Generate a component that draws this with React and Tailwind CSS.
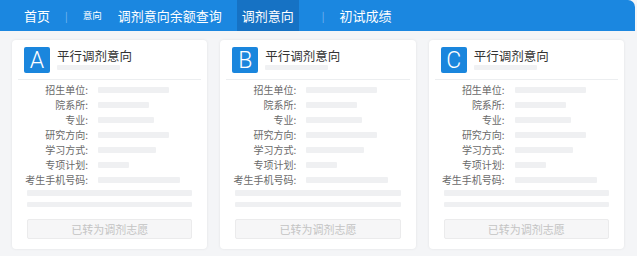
import React from "react";

const rows = [
  ["招生单位:", 71],
  ["院系所:", 51],
  ["专业:", 56],
  ["研究方向:", 71],
  ["学习方式:", 58],
  ["专项计划:", 31],
  ["考生手机号码:", 82],
];

function Card({ letter }) {
  return (
    <div className="flex-1 bg-white rounded-[4px] shadow-[0_0_3px_rgba(0,0,0,0.08)] px-[6px] pt-[7px] pb-[10px] flex flex-col">
      <div className="flex items-start gap-[7px] px-[6px]">
        <div className="w-[26px] h-[26px] bg-[#1a86dd] text-white flex items-center justify-center text-[23px] font-light leading-none rounded-[2px]" style={{ fontFamily: "Roboto, 'Noto Sans', sans-serif" }}>
          {letter}
        </div>
        <div className="flex flex-col pt-[1px]">
          <div className="text-[12.5px] leading-[16px] text-[#333]">平行调剂意向</div>
          <div className="w-[63px] h-[5px] bg-[#f0f1f3] mt-[1px] rounded-[1px]" />
        </div>
      </div>
      <div className="h-px bg-[#eceef0] mt-[6px] mb-[3px]" />
      <div className="flex flex-col">
        {rows.map(([label, w]) => (
          <div key={label} className="flex items-center h-[15px]">
            <div className="w-[70px] text-right text-[10px] text-[#6a6a6a] leading-none whitespace-nowrap">{label}</div>
            <div className="ml-[10px] h-[6px] bg-[#eff0f2] rounded-[1px]" style={{ width: w }} />
          </div>
        ))}
      </div>
      <div className="mx-[9px] mt-[2px] h-[6px] bg-[#eff0f2] rounded-[1px]" />
      <div className="mx-[9px] mt-[6px] h-[6px] bg-[#eff0f2] rounded-[1px]" />
      <div className="mx-[9px] mt-[12px] h-[21px] bg-[#f6f6f7] border border-[#ebebec] rounded-[2px] flex items-center justify-center text-[11px] text-[#c4c4c4]">
        已转为调剂志愿
      </div>
    </div>
  );
}

export default function App() {
  return (
    <div className="w-[637px] h-[256px] bg-[#f4f5f7] overflow-hidden" style={{ fontFamily: "'Noto Sans CJK SC', 'Noto Sans', sans-serif" }}>
      <div className="w-[635px] h-[31px] bg-[#1b87e0] rounded-tr-[7px] flex items-center text-white">
        <div className="ml-[24px] text-[13px]">首页</div>
        <div className="ml-[15px] text-[10px] text-[#7fbaf0]">|</div>
        <div className="ml-[15px] text-[9.5px]">意向</div>
        <div className="ml-[16px] text-[13px]">调剂意向余额查询</div>
        <div className="ml-[15px] h-[31px] px-[5px] bg-[#1672c4] flex items-center text-[13px]">调剂意向</div>
        <div className="ml-[23px] text-[10px] text-[#7fbaf0]">|</div>
        <div className="ml-[15px] text-[13px]">初试成绩</div>
      </div>
      <div className="flex gap-[13px] pl-[12px] pr-[13px] pt-[9px] w-[637px] h-[218px]">
        <Card letter="A" />
        <Card letter="B" />
        <Card letter="C" />
      </div>
    </div>
  );
}
